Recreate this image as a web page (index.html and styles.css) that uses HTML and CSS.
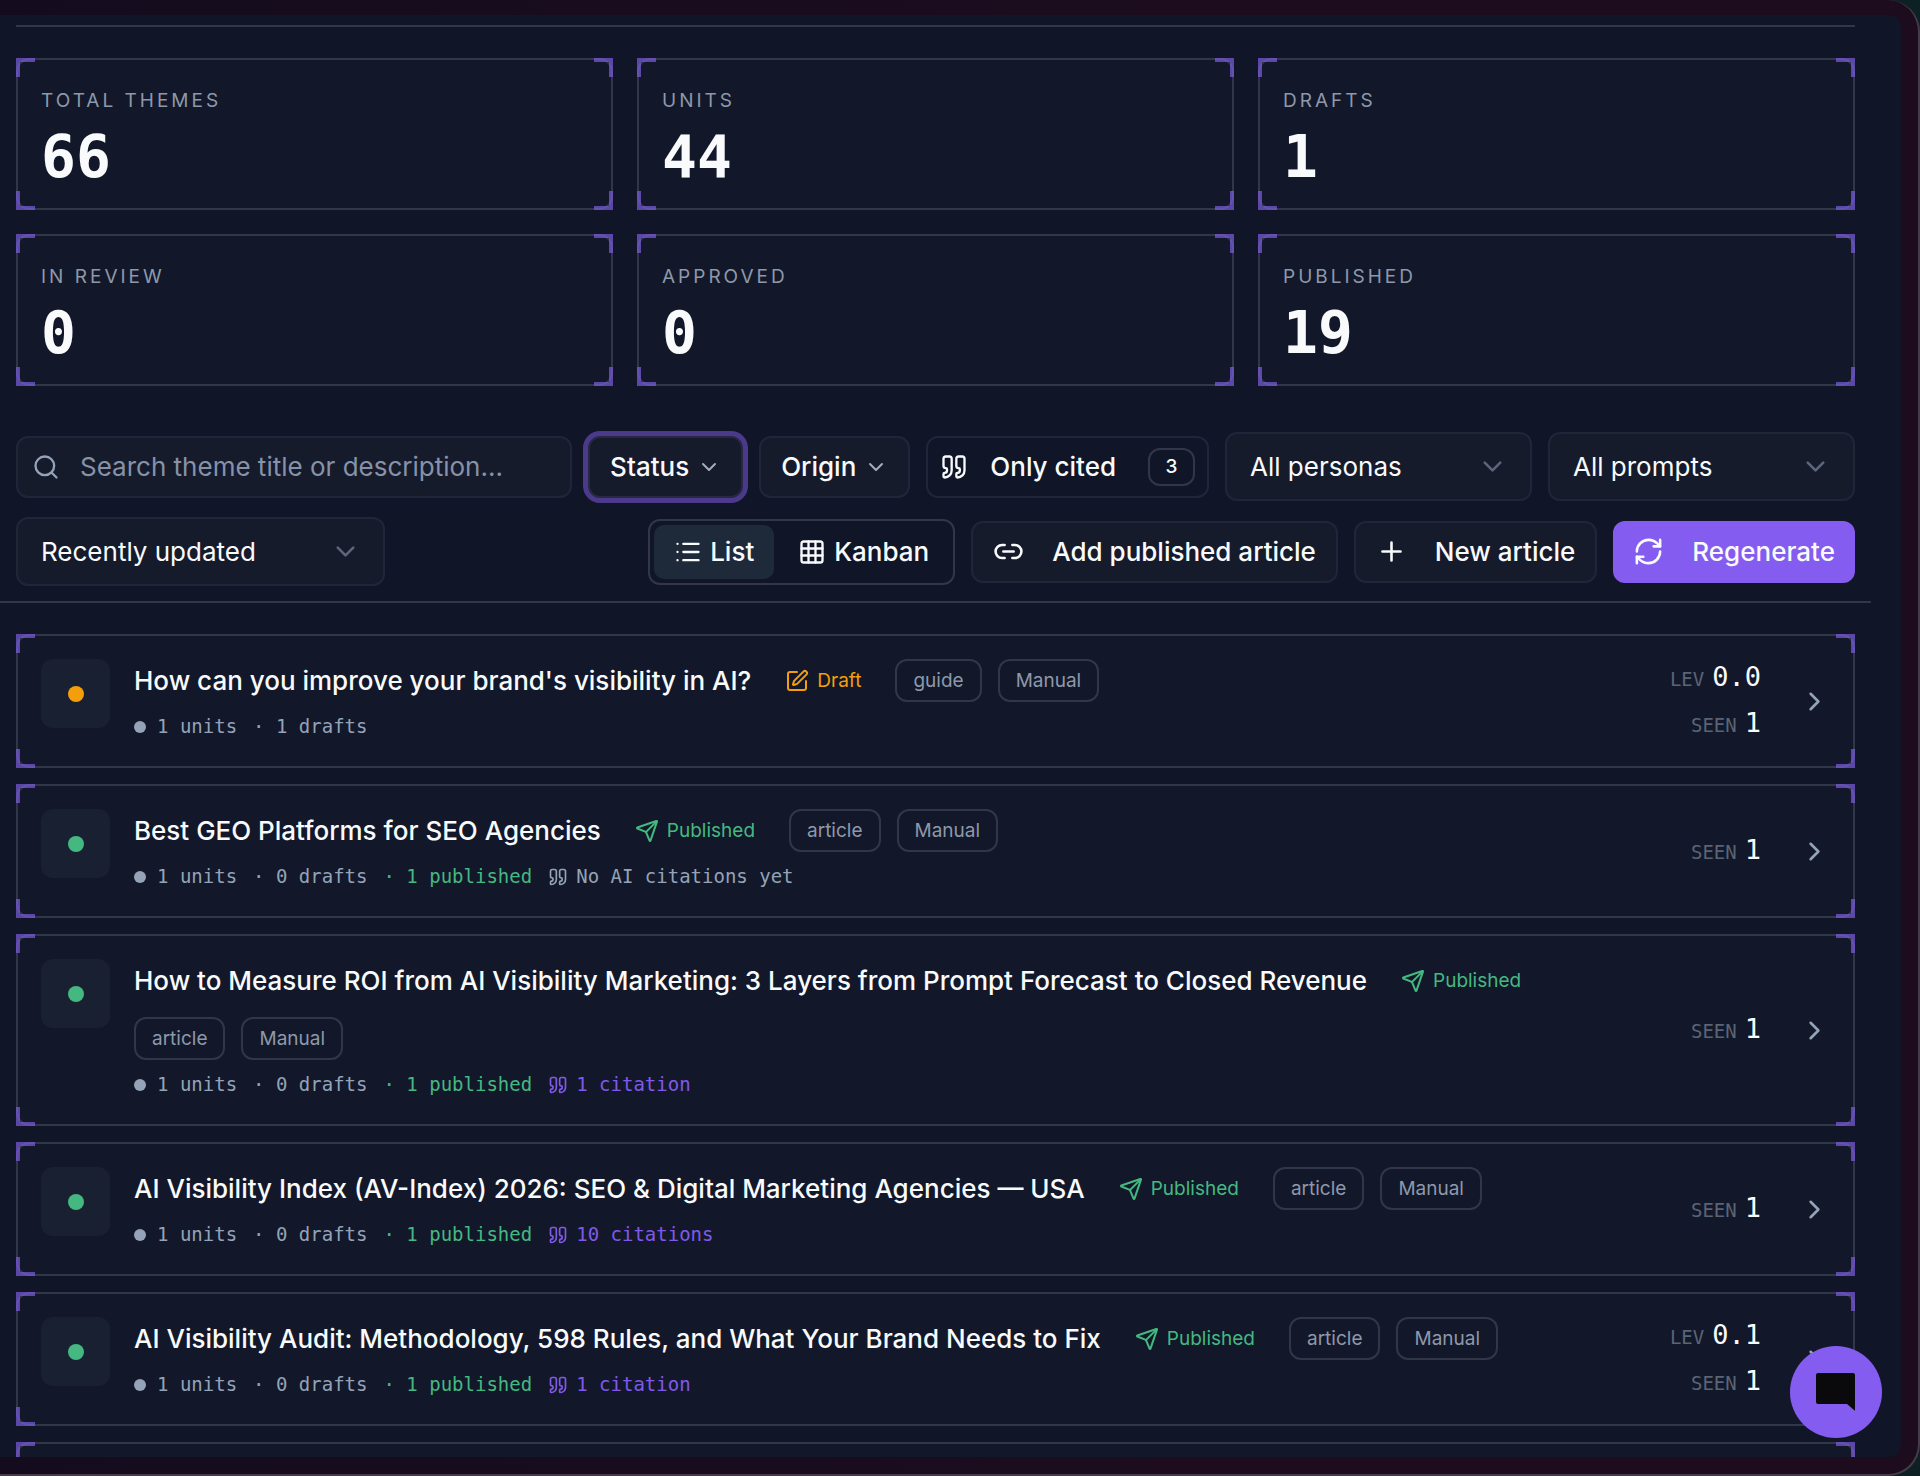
FILE: index.html
```html
<!DOCTYPE html>
<html lang="en">
<head>
<meta charset="utf-8">
<title>Themes</title>
<meta name="viewport" content="width=device-width, initial-scale=1">
<link rel="stylesheet" href="styles.css">
</head>
<body>
<svg class="sprite" aria-hidden="true">
  <symbol id="quote" viewBox="0 0 24 24"><path d="M16 3a2 2 0 0 0-2 2v6a2 2 0 0 0 2 2 1 1 0 0 1 1 1v1a2 2 0 0 1-2 2 1 1 0 0 0-1 1v2a1 1 0 0 0 1 1 6 6 0 0 0 6-6V5a2 2 0 0 0-2-2z"/><path d="M5 3a2 2 0 0 0-2 2v6a2 2 0 0 0 2 2 1 1 0 0 1 1 1v1a2 2 0 0 1-2 2 1 1 0 0 0-1 1v2a1 1 0 0 0 1 1 6 6 0 0 0 6-6V5a2 2 0 0 0-2-2z"/></symbol>
  <symbol id="send" viewBox="0 0 24 24"><path d="M14.536 21.686a.5.5 0 0 0 .937-.024l6.5-19a.496.496 0 0 0-.635-.635l-19 6.5a.5.5 0 0 0-.024.937l7.93 3.18a2 2 0 0 1 1.112 1.11z"/><path d="m21.854 2.147-10.94 10.939"/></symbol>
  <symbol id="pen" viewBox="0 0 24 24"><path d="M12 3H5a2 2 0 0 0-2 2v14a2 2 0 0 0 2 2h14a2 2 0 0 0 2-2v-7"/><path d="M18.375 2.625a1 1 0 0 1 3 3l-9.013 9.014a2 2 0 0 1-.853.505l-2.873.84a.5.5 0 0 1-.62-.62l.84-2.873a2 2 0 0 1 .506-.852z"/></symbol>
  <symbol id="down" viewBox="0 0 24 24"><path d="m6 9 6 6 6-6"/></symbol>
  <symbol id="right" viewBox="0 0 24 24"><path d="m9 18 6-6-6-6"/></symbol>
</svg>
<div class="window">
  <main class="panel">
    <hr class="rule">
    <section class="stats" aria-label="Totals">
      <div class="box stat"><span class="stat-label">TOTAL THEMES</span><span class="stat-value">66</span></div>
      <div class="box stat"><span class="stat-label">UNITS</span><span class="stat-value">44</span></div>
      <div class="box stat"><span class="stat-label">DRAFTS</span><span class="stat-value">1</span></div>
      <div class="box stat"><span class="stat-label">IN REVIEW</span><span class="stat-value">0</span></div>
      <div class="box stat"><span class="stat-label">APPROVED</span><span class="stat-value">0</span></div>
      <div class="box stat"><span class="stat-label">PUBLISHED</span><span class="stat-value">19</span></div>
    </section>

    <section class="toolbar" aria-label="Filters">
      <div class="tools">
        <label class="search">
          <svg class="icon i28" viewBox="0 0 24 24"><circle cx="11" cy="11" r="8"/><path d="m21 21-4.3-4.3"/></svg>
          <input type="text" aria-label="Search themes" placeholder="Search theme title or description...">
        </label>
        <button class="btn filter focused" type="button">Status <svg class="icon i24"><use href="#down"/></svg></button>
        <button class="btn filter" type="button">Origin <svg class="icon i24"><use href="#down"/></svg></button>
        <button class="btn cited" type="button"><svg class="icon i28"><use href="#quote"/></svg>Only cited<span class="count">3</span></button>
        <div class="select"><select aria-label="Persona"><option>All personas</option></select><svg class="icon i31"><use href="#down"/></svg></div>
        <div class="select"><select aria-label="Prompt"><option>All prompts</option></select><svg class="icon i31"><use href="#down"/></svg></div>
      </div>
      <div class="tools">
        <div class="select sort"><select aria-label="Sort order"><option>Recently updated</option></select><svg class="icon i31"><use href="#down"/></svg></div>
        <div class="views">
          <button class="view active" type="button"><svg class="icon i28" viewBox="0 0 24 24"><path d="M3 5h.01M3 12h.01M3 19h.01M8 5h13M8 12h13M8 19h13"/></svg>List</button>
          <button class="view" type="button"><svg class="icon i28" viewBox="0 0 24 24"><rect width="18" height="18" x="3" y="3" rx="2"/><path d="M3 9h18M3 15h18M9 3v18M15 3v18"/></svg>Kanban</button>
        </div>
        <button class="btn action" type="button"><svg class="icon i31" viewBox="0 0 24 24"><path d="M9 17H7A5 5 0 0 1 7 7h2M15 7h2a5 5 0 1 1 0 10h-2M8 12h8"/></svg>Add published article</button>
        <button class="btn action" type="button"><svg class="icon i31" viewBox="0 0 24 24"><path d="M5 12h14M12 5v14"/></svg>New article</button>
        <button class="btn action primary" type="button"><svg class="icon i31" viewBox="0 0 24 24"><path d="M3 12a9 9 0 0 1 9-9 9.75 9.75 0 0 1 6.74 2.74L21 8"/><path d="M21 3v5h-5M21 12a9 9 0 0 1-9 9 9.75 9.75 0 0 1-6.74-2.74L3 16"/><path d="M8 16H3v5"/></svg>Regenerate</button>
      </div>
    </section>

    <section class="list" aria-label="Themes">
      <article class="box theme">
        <div class="mark draft"></div>
        <div class="body">
          <div class="head"><h2>How can you improve your brand's visibility in AI?</h2><span class="status draft"><svg class="icon i24"><use href="#pen"/></svg>Draft</span><span class="tag">guide</span><span class="tag">Manual</span></div>
          <div class="meta"><span class="units">1 units</span><span>· 1 drafts</span></div>
        </div>
        <dl class="score"><div><dt>LEV</dt><dd>0.0</dd></div><div><dt>SEEN</dt><dd>1</dd></div></dl>
        <svg class="icon i31 go"><use href="#right"/></svg>
      </article>
      <article class="box theme">
        <div class="mark"></div>
        <div class="body">
          <div class="head"><h2>Best GEO Platforms for SEO Agencies</h2><span class="status"><svg class="icon i24"><use href="#send"/></svg>Published</span><span class="tag">article</span><span class="tag">Manual</span></div>
          <div class="meta"><span class="units">1 units</span><span>· 0 drafts</span><span class="pub">· 1 published</span><span class="cite none"><svg class="icon i20"><use href="#quote"/></svg>No AI citations yet</span></div>
        </div>
        <dl class="score"><div><dt>SEEN</dt><dd>1</dd></div></dl>
        <svg class="icon i31 go"><use href="#right"/></svg>
      </article>
      <article class="box theme">
        <div class="mark"></div>
        <div class="body">
          <div class="head"><h2>How to Measure ROI from AI Visibility Marketing: 3 Layers from Prompt Forecast to Closed Revenue</h2><span class="status"><svg class="icon i24"><use href="#send"/></svg>Published</span><span class="tag">article</span><span class="tag">Manual</span></div>
          <div class="meta"><span class="units">1 units</span><span>· 0 drafts</span><span class="pub">· 1 published</span><span class="cite"><svg class="icon i20"><use href="#quote"/></svg>1 citation</span></div>
        </div>
        <dl class="score"><div><dt>SEEN</dt><dd>1</dd></div></dl>
        <svg class="icon i31 go"><use href="#right"/></svg>
      </article>
      <article class="box theme">
        <div class="mark"></div>
        <div class="body">
          <div class="head"><h2>AI Visibility Index (AV-Index) 2026: SEO &amp; Digital Marketing Agencies — USA</h2><span class="status"><svg class="icon i24"><use href="#send"/></svg>Published</span><span class="tag">article</span><span class="tag">Manual</span></div>
          <div class="meta"><span class="units">1 units</span><span>· 0 drafts</span><span class="pub">· 1 published</span><span class="cite"><svg class="icon i20"><use href="#quote"/></svg>10 citations</span></div>
        </div>
        <dl class="score"><div><dt>SEEN</dt><dd>1</dd></div></dl>
        <svg class="icon i31 go"><use href="#right"/></svg>
      </article>
      <article class="box theme">
        <div class="mark"></div>
        <div class="body">
          <div class="head"><h2>AI Visibility Audit: Methodology, 598 Rules, and What Your Brand Needs to Fix</h2><span class="status"><svg class="icon i24"><use href="#send"/></svg>Published</span><span class="tag">article</span><span class="tag">Manual</span></div>
          <div class="meta"><span class="units">1 units</span><span>· 0 drafts</span><span class="pub">· 1 published</span><span class="cite"><svg class="icon i20"><use href="#quote"/></svg>1 citation</span></div>
        </div>
        <dl class="score"><div><dt>LEV</dt><dd>0.1</dd></div><div><dt>SEEN</dt><dd>1</dd></div></dl>
        <svg class="icon i31 go"><use href="#right"/></svg>
      </article>
      <article class="box theme next"></article>
    </section>
  </main>
  <button class="chat" type="button" aria-label="Open chat"><svg viewBox="0 0 40 38"><path d="M2 0h35q2 0 2 2v35q0 1-1 0l-7-6H2q-2 0-2-2V2q0-2 2-2z"/></svg></button>
</div>
</body>
</html>
```
FILE: styles.css
```css
* { box-sizing: border-box; }

body {
  margin: 0;
  background: #0d2024;
  color: #f8fafc;
  font-family: Inter, "Liberation Sans", sans-serif;
  font-size: 26px;
}

button, input, select { font: inherit; color: inherit; }

.sprite { position: absolute; width: 0; height: 0; }

.icon {
  flex: none;
  fill: none;
  stroke: currentColor;
  stroke-width: 2;
  stroke-linecap: round;
  stroke-linejoin: round;
}
.i20 { width: 20px; height: 20px; }
.i24 { width: 24px; height: 24px; }
.i28 { width: 28px; height: 28px; }
.i31 { width: 31px; height: 31px; }

.window {
  position: relative;
  height: 100vh;
  padding: 15px 17px 17px 0;
  overflow: hidden;
  background: linear-gradient(90deg, #140c1e, #1c0c1e 60%);
  border: 2px solid #463b4a;
  border-width: 0 2px 2px 0;
  border-radius: 0 32px 32px 0;
}

.panel {
  height: 100%;
  overflow: hidden;
  padding: 10px 46px 0 16px;
  background: #101627;
  border-radius: 0 12px 12px 0;
}

.rule { height: 2px; margin: 0 0 31px; border: 0; background: #313748; }

/* Card with bracketed corners */
.box {
  position: relative;
  background: #121829;
  border: 2px solid #313748;
  border-radius: 14px;
}
.box::before {
  content: "";
  position: absolute;
  inset: -2px;
  border: 4px solid rgba(124, 92, 224, 0.7);
  pointer-events: none;
  mask:
    linear-gradient(#000 0 0) 0 0 / 19px 19px no-repeat,
    linear-gradient(#000 0 0) 100% 0 / 19px 19px no-repeat,
    linear-gradient(#000 0 0) 0 100% / 19px 19px no-repeat,
    linear-gradient(#000 0 0) 100% 100% / 19px 19px no-repeat;
}

.stats { display: grid; grid-template-columns: repeat(3, 1fr); gap: 24px; }
.stat { display: flex; flex-direction: column; gap: 9px; padding: 28px 23px 17px; }
.stat-label { font-size: 19px; line-height: 26px; letter-spacing: 3px; color: #8e98ab; }
.stat-value { font: bold 58px/68px "DejaVu Sans Mono", monospace; }

.toolbar {
  display: flex;
  flex-direction: column;
  gap: 16px;
  margin: 46px -16px 0;
  padding: 0 16px 15px;
  border-bottom: 2px solid #313748;
}
.tools { display: flex; align-items: center; gap: 16px; }

.search, .btn, .select select {
  height: 62px;
  background: #161b2c;
  border: 2px solid #20263a;
  border-radius: 12px;
}
.search { flex: 1; display: flex; align-items: center; gap: 20px; padding: 0 14px; color: #94a3b8; }
.search input { flex: 1; min-width: 0; padding: 0; background: none; border: 0; outline: 0; }
.search input::placeholder { color: #8692a8; opacity: 1; }

.btn { display: flex; align-items: center; white-space: nowrap; font-weight: 500; }
.filter { gap: 8px; padding: 0 20px; }
.filter .icon { color: #a3adbe; }
.focused { border-color: #282843; box-shadow: 0 0 0 5px #4b3a8c; }
.cited { gap: 22px; padding: 0 12px; background: #101627; }
.count {
  margin-left: 10px;
  width: 47px;
  border: 2px solid #313748;
  border-radius: 12px;
  font-size: 19px;
  line-height: 34px;
  text-align: center;
}

.select { position: relative; flex: none; width: 307px; }
.select select { appearance: none; display: block; width: 100%; height: 69px; padding: 0 23px; }
.select .icon { position: absolute; right: 24px; top: 19px; color: #5c667a; pointer-events: none; }
.sort { width: 369px; margin-right: auto; }

.views { display: flex; gap: 4px; padding: 4px; border: 2px solid #313748; border-radius: 12px; }
.view {
  display: flex;
  align-items: center;
  gap: 8px;
  height: 54px;
  padding: 0 20px;
  background: none;
  border: 0;
  border-radius: 10px;
  font-weight: 500;
}
.view.active { background: #1e2939; }

.action { gap: 28px; padding: 0 20px; }
.primary { padding: 0 18px; background: #855cf0; border-color: #855cf0; }

.list { display: flex; flex-direction: column; gap: 16px; margin-top: 31px; }
.theme { display: flex; align-items: center; padding: 23px; }
.next { min-height: 134px; }

.mark {
  flex: none;
  align-self: flex-start;
  display: grid;
  place-items: center;
  width: 69px;
  height: 69px;
  border-radius: 12px;
  background: #192031;
  color: #45b881;
}
.mark::before { content: ""; width: 16px; height: 16px; border-radius: 50%; background: currentColor; }
.mark.draft, .status.draft { color: #f59e0b; }

.body { flex: 1; min-width: 0; margin-left: 24px; }
.head { display: flex; flex-wrap: wrap; align-items: center; gap: 15px 16px; margin-bottom: 8px; }
.head h2 { margin: 0; font-size: 26px; line-height: 43px; font-weight: 500; }
.status { display: flex; align-items: center; gap: 8px; padding: 0 18px; font-size: 19px; color: #45b881; }
.tag {
  padding: 0 16px;
  border: 2px solid #313748;
  border-radius: 12px;
  font-size: 19px;
  line-height: 39px;
  color: #8e98ab;
}

.meta { display: flex; gap: 16px; font: 19px/33px "DejaVu Sans Mono", monospace; color: #94a3b8; }
.meta span { display: flex; align-items: center; }
.units::before { content: ""; width: 12px; height: 12px; margin-right: 11px; border-radius: 50%; background: #94a3b8; }
.meta .pub { color: #45b881; }
.meta .cite { gap: 8px; color: #8059ea; }
.meta .none { color: #94a3b8; }

.score {
  display: grid;
  gap: 8px;
  min-width: 92px;
  margin: 0 38px 0 60px;
  font-family: "DejaVu Sans Mono", monospace;
}
.score div { display: flex; justify-content: flex-end; align-items: baseline; gap: 8px; line-height: 35px; }
.score dt { font-size: 19px; color: #5a6478; }
.score dd { margin: 0; font-size: 27px; }
.go { color: #94a3b8; }

.chat {
  position: absolute;
  right: 36px;
  bottom: 36px;
  display: grid;
  place-items: center;
  width: 92px;
  height: 92px;
  padding: 0;
  border: 0;
  border-radius: 50%;
  background: #855cf0;
}
.chat svg { width: 40px; height: 38px; fill: #0a0a0c; }
```
